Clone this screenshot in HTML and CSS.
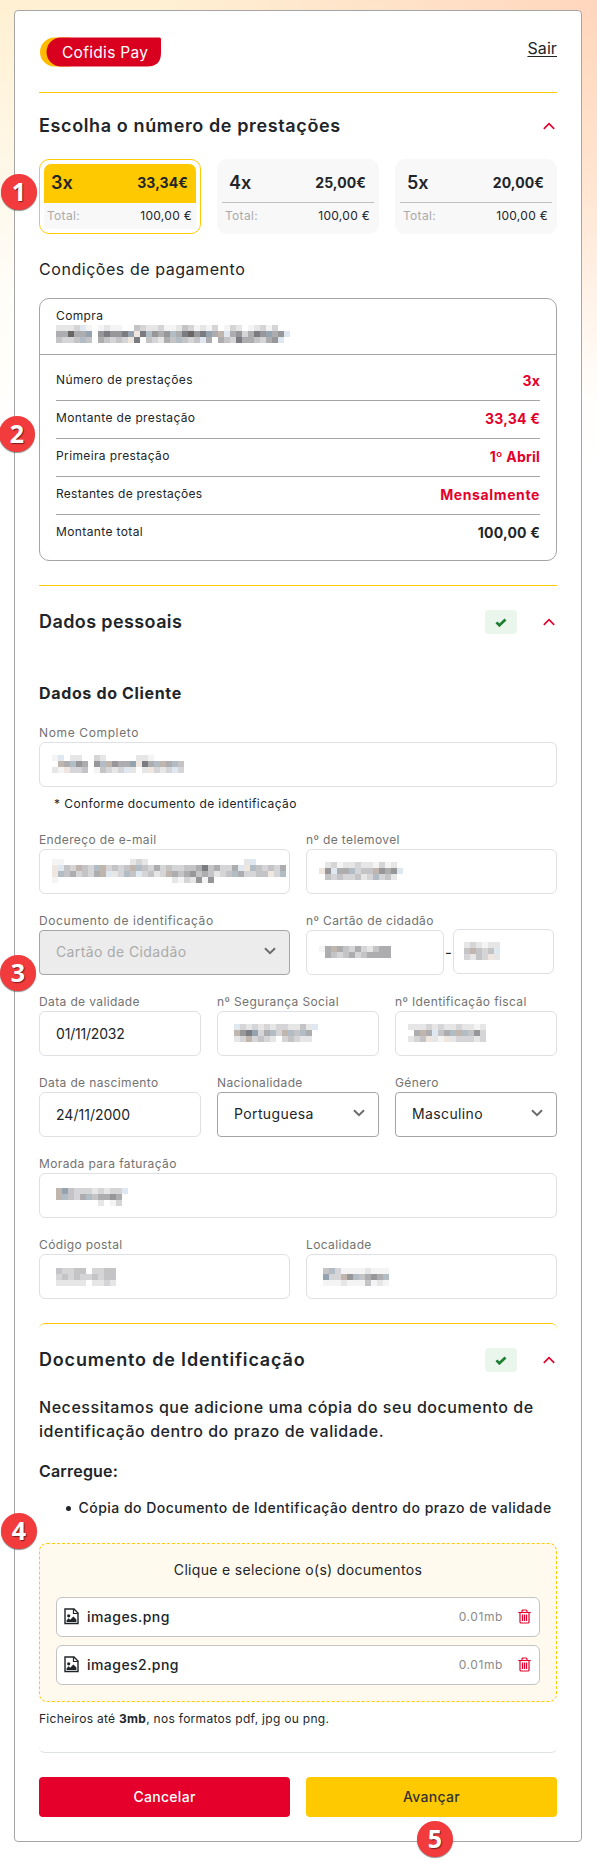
FILE: index.html
```html
<!DOCTYPE html>
<html lang="pt">
<head>
<meta charset="utf-8">
<title>Cofidis Pay</title>
<link rel="stylesheet" href="styles.css">
</head>
<body>
<svg class="defs" width="0" height="0">
  <symbol id="up" viewBox="0 0 12 8"><path d="M.8 6.9 6 1.6l5.2 5.3" fill="none" stroke="#e4002b" stroke-width="1.6"/></symbol>
  <symbol id="down" viewBox="0 0 12 8"><path d="M1 1.2 6 6.2l5-5" fill="none" stroke="#6c6c6c" stroke-width="2"/></symbol>
  <symbol id="check" viewBox="0 0 12 9"><path d="M1.4 4.4 4.4 7.3 10.5 1.5" fill="none" stroke="#1e7e34" stroke-width="2.7"/></symbol>
  <symbol id="image" viewBox="0 0 15 17"><path d="M1 1h9l4 4v10.500H1z" fill="none" stroke="#212529" stroke-width="1.4"/><path d="M9.500 1v4.500H14" fill="none" stroke="#212529" stroke-width="1.2"/><circle cx="4.700" cy="7.800" r="1.600" fill="#212529"/><path d="M2.600 14v-1.800l2-2 1.600 1.500L9.400 8.500l3 3V14z" fill="#212529"/></symbol>
  <symbol id="trash" viewBox="0 0 13 15"><path d="M.3 3.500h12.400M4 3.300V2Q4 1 5 1h3Q9 1 9 2v1.300M2 3.500v9.500q0 1 1 1h7q1 0 1-1V3.500M4.500 5.500V12M6.500 5.500V12M8.500 5.500V12" fill="none" stroke="#e4002b" stroke-width="1.200"/></symbol>
</svg>
<main class="card">
  <header class="header">
    <svg class="logo" width="122" height="30" viewBox="0 0 122 30">
      <path d="M14.500 .5H30v29H14.500a14.500 14.500 0 0 1 0-29z" fill="#fb0"/>
      <path d="M21 .5h98.500q1.500 0 1.500 1.500v14q0 13.500-14 13.500H21a14.500 14.500 0 0 1 0-29z" fill="#d9001f"/>
      <text class="logo-text" x="22" y="21">Cofidis Pay</text>
    </svg>
    <a class="exit">Sair</a>
  </header>

  <section class="plans">
    <div class="heading"><h2 class="title title-plans">Escolha o número de prestações</h2><svg class="chevron"><use href="#up"/></svg></div>
    <div class="options">
      <div class="option selected"><div class="option-top"><span class="times">3x</span><b class="price">33,34€</b></div><div class="option-total"><span class="muted">Total:</span><span>100,00 €</span></div></div>
      <div class="option"><div class="option-top"><span class="times">4x</span><b class="price">25,00€</b></div><div class="option-total"><span class="muted">Total:</span><span>100,00 €</span></div></div>
      <div class="option"><div class="option-top"><span class="times">5x</span><b class="price">20,00€</b></div><div class="option-total"><span class="muted">Total:</span><span>100,00 €</span></div></div>
    </div>
    <h3 class="subtitle">Condições de pagamento</h3>
    <div class="terms">
      <div class="purchase"><span>Compra</span><svg class="mosaic" data-rows="bbbcqa.abaa..dcbbcaabdcabac.acb.abcac.|eeheet.fgffgtpgsfefseghfgterqefcegftefq|dccdsd.edcdcpg.dcbedsdcdqe.edcgeedcefq"></svg></div>
      <div class="lines">
        <div class="line"><span>Número de prestações</span><b class="red">3x</b></div>
        <div class="line"><span>Montante de prestação</span><b class="red">33,34 €</b></div>
        <div class="line"><span>Primeira prestação</span><b class="red">1º Abril</b></div>
        <div class="line"><span class="tight">Restantes de prestações</span><b class="red wide">Mensalmente</b></div>
        <div class="line"><span>Montante total</span><b>100,00 €</b></div>
      </div>
    </div>
  </section>

  <section class="section">
    <div class="heading"><h2 class="title title-personal">Dados pessoais</h2><span class="ok"><svg><use href="#check"/></svg></span><svg class="chevron"><use href="#up"/></svg></div>
    <h3 class="group-title">Dados do Cliente</h3>
    <div class="form">
      <div class="field"><label class="name">Nome Completo</label><div class="input pad-sm"><svg class="mosaic" data-rows="aq.bb..cb.....bba.....|.resfe.fsrfeetpgesresd|bapccd.adcbcqb.bpcbcqc"></svg></div><p class="hint">* Conforme documento de identificação</p></div>
      <div class="row two">
        <div class="field"><label>Endereço de e-mail</label><div class="input pad-sm"><svg class="mosaic" data-rows="aa...........bcb................bq.....|pqdcrdcsrcdcdrsdcecdccddegdecceqpsdcdce|psdecdcerqbcsdqcdbcredefdedbcdseccddpcs|a...................bacbfaf............"></svg></div></div>
        <div class="field"><label>nº de telemovel</label><div class="input pad-sm"><svg class="mosaic" data-rows=".bcabbcbbacab.|pfqeescddrfefq|.dcdccdbcscdb."></svg></div></div>
      </div>
      <div class="row two">
        <div class="field"><label class="document">Documento de identificação</label><div class="input select disabled">Cartão de Cidadão<svg class="arrow"><use href="#down"/></svg></div></div>
        <div class="field"><label>nº Cartão de cidadão</label><div class="pair"><div class="input pad-sm"><svg class="mosaic" data-rows="aeredcecbdee|.edcdecdeeee"></svg></div><span class="dash">-</span><div class="input check-digits"><svg class="mosaic" data-rows="bcbabb|drdcdq|cbdcpb"></svg></div></div></div>
      </div>
      <div class="row three">
        <div class="field"><label>Data de validade</label><div class="input dates">01/11/2032</div></div>
        <div class="field"><label>nº Segurança Social</label><div class="input"><svg class="mosaic" data-rows="qcbcbcbccbbdbq|rfgtcescrsdse.|bcrcdcb.cdcbb."></svg></div></div>
        <div class="field"><label>nº Identificação fiscal</label><div class="input pad-sm"><svg class="mosaic" data-rows="bbbcbcbbcbbab|.ereqdesrsdfc|bcdpbapbcccbc"></svg></div></div>
      </div>
      <div class="row three">
        <div class="field"><label>Data de nascimento</label><div class="input dates late">24/11/2000</div></div>
        <div class="field"><label>Nacionalidade</label><div class="input select">Portuguesa<svg class="arrow"><use href="#down"/></svg></div></div>
        <div class="field"><label>Género</label><div class="input select">Masculino<svg class="arrow"><use href="#down"/></svg></div></div>
      </div>
      <div class="field"><label>Morada para faturação</label><div class="input"><svg class="mosaic low" data-rows="rtdcccbcbccq|rsdcesdeefe.|.......b.ac."></svg></div></div>
      <div class="row two">
        <div class="field"><label>Código postal</label><div class="input low-text"><svg class="mosaic" data-rows="dccdd.ccdd|cdcdccdcdd|bbbbb.bbcb"></svg></div></div>
        <div class="field"><label>Localidade</label><div class="input low-text"><svg class="mosaic" data-rows="dscaaaabaaa|tccrfsdefes|aaabaaadaba"></svg></div></div>
      </div>
    </div>
  </section>

  <section class="section curved">
    <div class="heading"><h2 class="title title-document">Documento de Identificação</h2><span class="ok"><svg><use href="#check"/></svg></span><svg class="chevron"><use href="#up"/></svg></div>
    <p class="lead">Necessitamos que adicione uma cópia do seu documento de identificação dentro do prazo de validade.</p>
    <p class="upload-title">Carregue:</p>
    <ul class="list"><li>Cópia do Documento de Identificação dentro do prazo de validade</li></ul>
    <div class="dropzone">
      <p class="drop-title">Clique e selecione o(s) documentos</p>
      <div class="file"><svg class="file-icon"><use href="#image"/></svg><span class="file-name">images.png</span><span class="size">0.01mb</span><svg class="trash"><use href="#trash"/></svg></div>
      <div class="file"><svg class="file-icon"><use href="#image"/></svg><span class="file-name">images2.png</span><span class="size">0.01mb</span><svg class="trash"><use href="#trash"/></svg></div>
    </div>
    <p class="formats">Ficheiros até <b>3mb</b>, nos formatos pdf, jpg ou png.</p>
  </section>
  <footer class="row two actions"><button class="btn cancel">Cancelar</button><button class="btn next">Avançar</button></footer>
</main>
<span class="step s1">1</span><span class="step s2">2</span><span class="step s3">3</span><span class="step s4">4</span><span class="step s5">5</span>
<script src="mosaic.js"></script>
</body>
</html>
```
FILE: styles.css
```css
* { box-sizing: border-box; }
body {
  margin: 0;
  height: 1861px;
  padding: 10px 15px 19px 14px;
  position: relative;
  overflow: hidden;
  color: #212529;
  font: 400 12px/17px Inter, "Open Sans", sans-serif;
  letter-spacing: .38px;
  background:
    radial-gradient(ellipse 440px 400px at 100% 0, #ffd6bd 0%, rgba(255, 218, 195, .75) 35%, rgba(255, 240, 230, 0) 100%),
    linear-gradient(#fff0d2 0, #fffdf8 290px, #fff 480px);
}
h2, h3, p, ul { margin: 0; }
.defs { position: absolute; }
.card {
  height: 1832px;
  padding: 0 24px 24px;
  border: 1px solid #a5a5a5;
  border-radius: 4px;
  background: #fff;
}
.header {
  display: flex;
  justify-content: space-between;
  height: 82px;
  padding-top: 26px;
  border-bottom: 1px solid #ffcb05;
}
.logo { margin-left: 1px; }
.logo-text { font: 400 15.5px Inter, sans-serif; letter-spacing: .3px; fill: #fff; }
.exit { font-size: 16px; line-height: 24px; letter-spacing: .1px; text-decoration: underline; text-underline-offset: 2px; margin-top: -1px; }
.heading { display: flex; align-items: center; height: 24px; }
.title { flex: 1; font-size: 18px; font-weight: 600; line-height: 24px; }
.title-plans { letter-spacing: .62px; }
.title-personal { letter-spacing: .4px; }
.title-document { letter-spacing: .82px; }
.chevron { width: 12px; height: 8px; margin: 0 2px 0 26px; }
.plans { padding-top: 21px; }
.options { display: grid; grid-template-columns: repeat(3, minmax(0, 1fr)); gap: 16px; margin-top: 21px; }
.option { height: 75px; padding: 4px; border: 1px solid #f8f8f8; border-radius: 10px; background: #f8f8f8; letter-spacing: .3px; }
.option-top { display: flex; justify-content: space-between; align-items: center; height: 39px; padding: 0 8px 2px 7px; border-bottom: 1px solid #bfbfbf; }
.option-total { display: flex; justify-content: space-between; height: 26px; padding: 4px 4px 0 3px; background: #f8f8f8; }
.selected { background: #fff; border-color: #ffcb05; }
.selected .option-top { background: #ffc900; border-color: #ffc900; border-radius: 7px 7px 0 0; }
.times { font-size: 18px; font-weight: 600; letter-spacing: 0; padding-top: 1px; }
.price { font-size: 14px; letter-spacing: .1px; }
.muted { color: #aaa; }
.subtitle { margin-top: 23px; font-size: 16px; font-weight: 400; line-height: 24px; letter-spacing: .55px; }
.terms { margin-top: 17px; height: 263px; border: 1px solid #a5a5a5; border-radius: 10px; }
.purchase { display: flex; flex-direction: column; gap: 1px; height: 56px; padding: 8px 16px 0; border-bottom: 1px solid #a5a5a5; }
.mosaic { display: block; flex: none; }
.lines { padding: 8px 16px; }
.line { display: flex; justify-content: space-between; height: 38px; padding-top: 8px; border-bottom: 1px solid #a5a5a5; }
.line:last-child { border: 0; }
.line b { font-size: 14px; line-height: 19px; letter-spacing: .2px; }
.line .wide { letter-spacing: .62px; }
.tight { letter-spacing: .28px; }
.red { color: #e4002b; }
.section { margin-top: 24px; padding-top: 24px; border-top: 1px solid #ffcb05; }
.ok { display: flex; align-items: center; justify-content: center; width: 32px; height: 24px; border-radius: 4px; background: #eaf6ec; }
.ok svg { width: 12px; height: 9px; }
.group-title { margin-top: 47px; font-size: 16px; font-weight: 700; line-height: 24px; letter-spacing: .65px; }
.form { display: flex; flex-direction: column; gap: 19px; margin-top: 20px; }
.row { display: grid; gap: 16px; }
.two { grid-template-columns: repeat(2, minmax(0, 1fr)); }
.three { grid-template-columns: repeat(3, minmax(0, 1fr)); }
.field label { display: block; height: 17px; line-height: 16px; color: #727272; white-space: nowrap; }
.field .name { letter-spacing: .63px; }
.field .document { letter-spacing: .58px; }
.input { display: flex; align-items: center; height: 45px; padding: 0 16px 2px; border: 1px solid #dfe0e5; border-radius: 6px; background: #fff; font-size: 14px; letter-spacing: .38px; overflow: hidden; }
.pad-sm { padding: 0 0 2px 12px; }
.low-text { padding-bottom: 0; }
.dates { padding-bottom: 1px; font-size: 14px; letter-spacing: -.2px; }
.late { letter-spacing: .02px; }
.low { margin-top: 4px; }
.hint { margin: 8px 0 1px; padding-left: 15px; letter-spacing: .41px; }
.select { justify-content: space-between; padding-right: 13px; border-color: #a5a5a5; border-radius: 4px; }
.disabled { background: #ececec; color: #aaa; }
.arrow { width: 12px; height: 8px; margin-top: -1px; }
.pair { display: flex; align-items: center; }
.pair .pad-sm { width: 138px; }
.pair .check-digits { width: 101px; padding: 0 10px 2px; margin-top: -2px; }
.dash { width: 9px; text-align: center; font-size: 15px; letter-spacing: 0; }
.curved { border-radius: 6px; border-bottom: 1px solid #dee2e6; padding-bottom: 24px; }
.lead { margin-top: 23px; font-size: 16px; font-weight: 450; line-height: 24px; letter-spacing: .55px; }
.upload-title { margin-top: 16px; font-size: 16px; font-weight: 600; line-height: 24px; letter-spacing: .19px; }
.list { margin-top: 15px; padding-left: 40px; list-style: none; font-size: 14px; font-weight: 450; line-height: 20px; letter-spacing: .48px; white-space: nowrap; }
.list li::before { content: ""; display: inline-block; width: 5px; height: 5px; margin: 0 7.5px 2px -13px; border-radius: 50%; background: #212529; }
.dropzone { display: flex; flex-direction: column; gap: 8px; margin-top: 25px; padding: 16px; border: 1px dashed #ffcb05; border-radius: 8px; background: #fff9ee; }
.drop-title { margin-bottom: 9px; text-align: center; font-size: 14px; line-height: 20px; letter-spacing: .32px; }
.file { display: flex; align-items: center; height: 40px; padding: 0 8px 0 7px; border: 1px solid #c4c4c4; border-radius: 6px; background: #fff; }
.file-icon { width: 15px; height: 17px; margin-right: 8px; margin-top: -2px; }
.file-name { flex: 1; margin-top: -2px; font-size: 14px; font-weight: 450; letter-spacing: .45px; }
.size { color: #8a8a8a; margin-right: 15px; letter-spacing: .6px; margin-top: -1px; }
.trash { width: 13px; height: 15px; margin-top: -2px; }
.formats { height: 18px; margin-top: 8px; letter-spacing: .29px; }
.actions { margin-top: 24px; }
.btn { height: 40px; padding-bottom: 2px; border: 0; border-radius: 4px; font: 450 14px Inter, sans-serif; letter-spacing: .3px; }
.cancel { background: #e4002b; color: #fff; }
.next { background: #ffc900; color: #333; }
.step { position: absolute; width: 36px; height: 36px; border-radius: 50%; background: #f23b3c; color: #fff; font: 700 25px/35px "Noto Sans", sans-serif; letter-spacing: 0; text-align: center; text-shadow: 1px 1px 1px rgba(0, 0, 0, .5); box-shadow: 0 1px 1px rgba(0, 0, 0, .45); }
.s1 { left: 1px; top: 174px; }
.s2 { left: -1px; top: 416px; }
.s3 { left: 0; top: 955px; }
.s4 { left: 1px; top: 1513px; }
.s5 { left: 417px; top: 1821px; }
```
FILE: mosaic.js
```
// Paints the pixelated placeholders that hide private values.
const CELL = 6;
const TONES = {
  a: "#f4f4f5", b: "#e6e6e7", c: "#d5d5d7", d: "#c4c4c7", e: "#adadb0", f: "#97979a", g: "#7b7b82", h: "#696663",
  p: "#f0e6e0", q: "#dfe8f0", r: "#c0b6ae", s: "#b2bcc4", t: "#95a2b0"
};
document.querySelectorAll(".mosaic").forEach(svg => {
  const rows = svg.dataset.rows.split("|");
  svg.setAttribute("width", Math.max(...rows.map(r => r.length)) * CELL);
  svg.setAttribute("height", rows.length * CELL);
  rows.forEach((row, y) => [...row].forEach((tone, x) => {
    if (!TONES[tone]) return;
    const cell = document.createElementNS("http://www.w3.org/2000/svg", "rect");
    cell.setAttribute("x", x * CELL);
    cell.setAttribute("y", y * CELL);
    cell.setAttribute("width", CELL);
    cell.setAttribute("height", CELL);
    cell.setAttribute("fill", TONES[tone]);
    svg.append(cell);
  }));
});
```
